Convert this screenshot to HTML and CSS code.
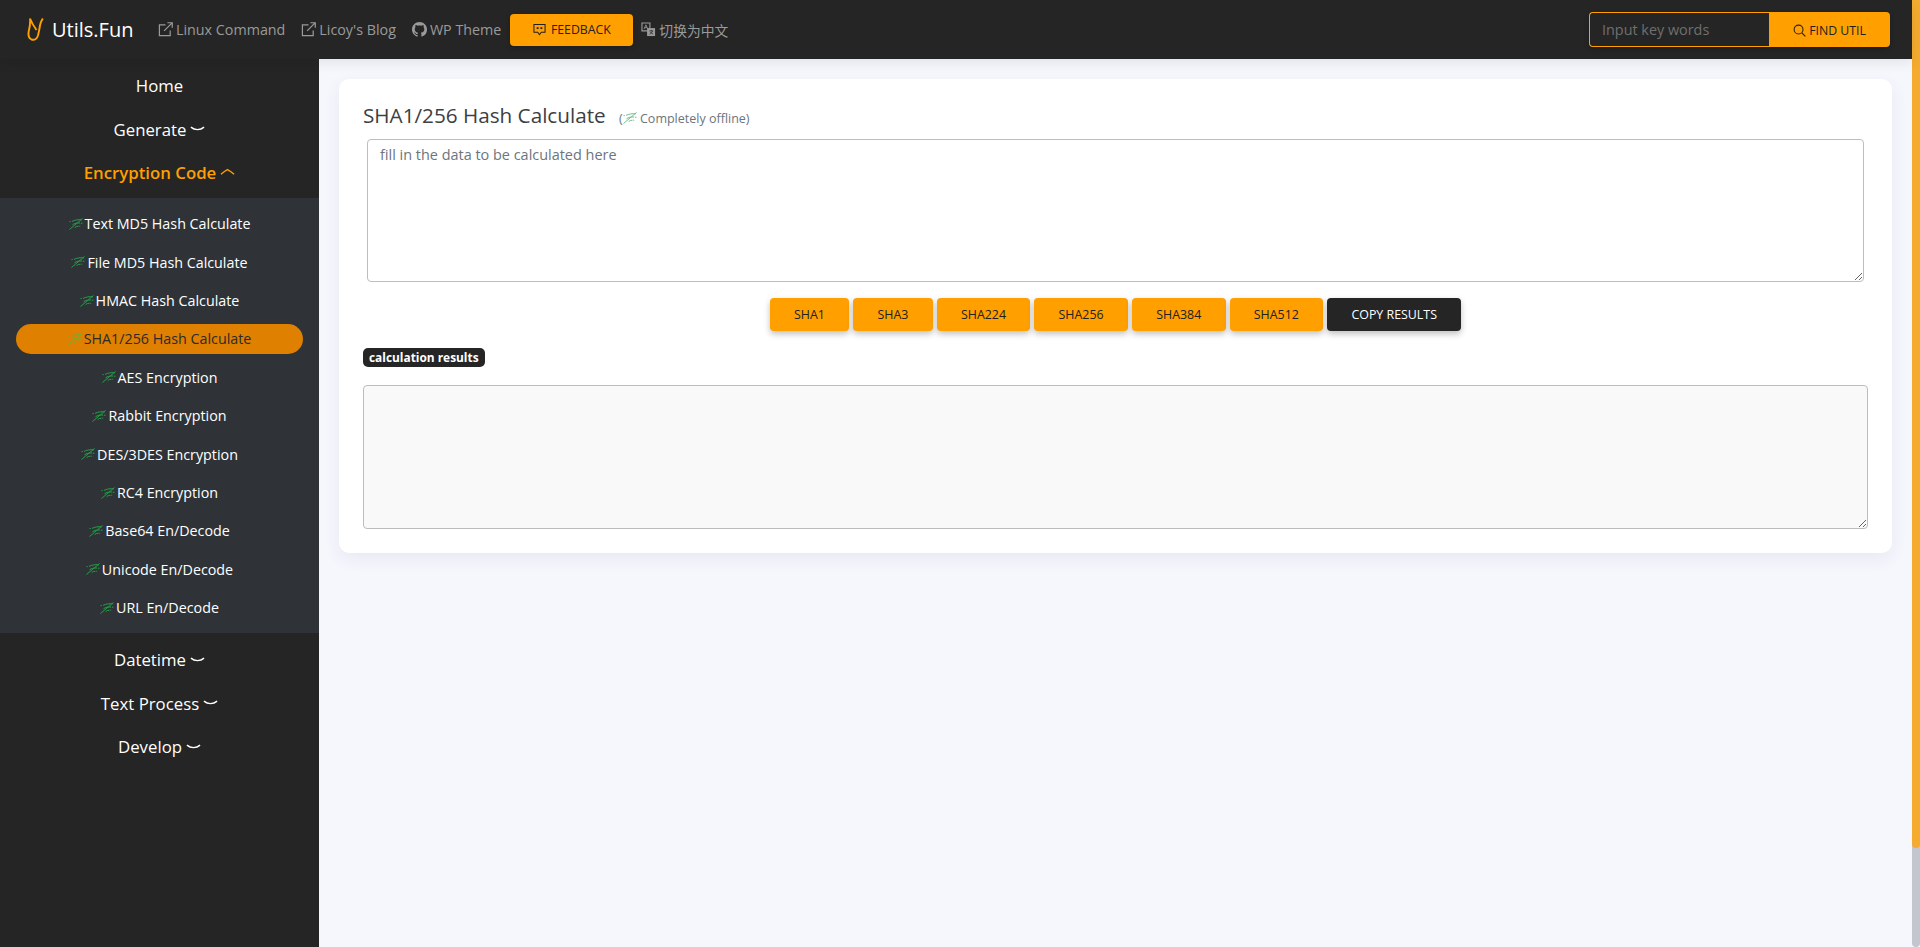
FILE: index.html
```html
<!DOCTYPE html>
<html lang="en">
<head>
    <meta charset="UTF-8">
    <meta name="viewport" content="width=device-width, initial-scale=1.0">
    <title>SHA1/256 Hash Calculate</title>
    <link rel="stylesheet" href="styles.css">
</head>
<body>
    <svg class="icon-defs" width="0" height="0">
        <symbol id="offline" viewBox="0 0 14 12">
            <path d="M.5 11.500 13.500.5M3 3.400C6 1.900 9 1.500 13 1.800M.5 3.600h1.300M3.500 6.800C5.500 5.300 8 4.800 11 5M11.800 5.200h1.700M5.700 9.500c1-.8 2.200-1.300 3.800-1.300M10.200 8.200h1" fill="none" stroke="currentColor" stroke-width="1"/>
        </symbol>
        <symbol id="external" viewBox="0 0 16 16">
            <path d="M13 9v5.500H1.500V3H8" fill="none" stroke="currentColor" stroke-width="1.300"/>
            <path d="M6.500 9.500 15 1M10 .8h5.200V6" fill="none" stroke="currentColor" stroke-width="1.300"/>
        </symbol>
        <symbol id="chevron-down" viewBox="0 0 16 8">
            <path d="M1 2c4 3.500 10 3.500 14 0" fill="none" stroke="currentColor" stroke-width="1.500"/>
        </symbol>
        <symbol id="chevron-up" viewBox="0 0 16 8">
            <path d="M1 6.500C5 3 7 2 8 1.500c1 .5 3 1.500 7 5" fill="none" stroke="currentColor" stroke-width="1.500"/>
        </symbol>
    </svg>

    <div class="page">
        <header class="topbar">
            <a class="brand">
                <svg class="brand-icon" viewBox="0 0 17 23">
                    <path d="M3 .5C3.500 5 3 8 2 12c-1 4-1 8 2.500 9.500 3 1 5.500-.5 6.500-4 1-4 1.500-7 2-10 .3-2.500 1.500-5 2.800-7M3 .5c1.500 4 4 8 6.500 11.500" fill="none" stroke="#ff9f00" stroke-width="1.900"/>
                </svg>
                <span>Utils.Fun</span>
            </a>
            <nav class="topnav">
                <a class="topnav-link"><svg class="topnav-icon"><use href="#external"/></svg>Linux Command</a>
                <a class="topnav-link"><svg class="topnav-icon"><use href="#external"/></svg>Licoy's Blog</a>
                <a class="topnav-link">
                    <svg class="topnav-icon" viewBox="0 0 16 16"><path fill="currentColor" d="M8 0C3.580 0 0 3.580 0 8c0 3.540 2.290 6.530 5.470 7.590.4.070.55-.17.55-.38 0-.19-.01-.82-.01-1.490-2.010.37-2.530-.49-2.690-.94-.09-.23-.48-.94-.82-1.130-.28-.15-.68-.52-.01-.53.63-.01 1.080.58 1.230.82.720 1.210 1.870.870 2.330.660.070-.520.280-.870.510-1.070-1.780-.2-3.640-.890-3.640-3.950 0-.870.310-1.590.820-2.150-.08-.2-.36-1.020.08-2.120 0 0 .67-.21 2.200.820.640-.18 1.320-.27 2-.27s1.360.09 2 .27c1.530-1.040 2.200-.82 2.200-.82.440 1.100.160 1.920.08 2.120.51.560.82 1.270.82 2.150 0 3.070-1.870 3.750-3.650 3.950.29.250.54.730.54 1.480 0 1.070-.01 1.930-.01 2.200 0 .21.150.46.55.38A8.010 8.010 0 0 0 16 8c0-4.420-3.580-8-8-8z"/></svg>
                    WP Theme
                </a>
                <a class="feedback-btn">
                    <svg class="feedback-icon" viewBox="0 0 14 14"><path d="M1 1.500h12v8.500H9l-2 2.500L5 10H1z" fill="none" stroke="currentColor" stroke-width="1.100"/><path d="M4 4.500h2v2H4zM8 4.500h2v2H8z" fill="currentColor"/></svg>
                    Feedback
                </a>
                <a class="topnav-link">
                    <svg class="topnav-icon" viewBox="0 0 16 16"><path d="M1 1h8.500v8.500H1z" fill="none" stroke="currentColor" stroke-width="1.200"/><path d="M6.500 6.500H15V15H6.500z" fill="currentColor"/><path d="M3.300 7.500 5.200 3l2 4.500M4 6h2.400" fill="none" stroke="currentColor" stroke-width=".9"/><path d="M9 9.500h4M11 8.500v1M12.300 9.500c-.5 1.800-1.800 3-3.300 3.500M9.800 10.500c.7 1.200 1.800 2 3.200 2.400" fill="none" stroke="#252525" stroke-width=".8"/></svg>
                    <span class="lang-text">切换为中文</span>
                </a>
            </nav>
            <form class="search">
                <input class="search-input" type="text" placeholder="Input key words">
                <button class="search-btn" type="button">
                    <svg class="search-icon" viewBox="0 0 14 14"><circle cx="6" cy="6" r="4.800" fill="none" stroke="currentColor" stroke-width="1.100"/><path d="m9.500 9.500 3.800 3.800" stroke="currentColor" stroke-width="1.200"/></svg>
                    Find Util
                </button>
            </form>
        </header>

        <div class="layout">
            <aside class="sidebar">
                <a class="menu-item">Home</a>
                <a class="menu-item">Generate <svg class="chevron"><use href="#chevron-down"/></svg></a>
                <a class="menu-item menu-item-open">Encryption Code <svg class="chevron"><use href="#chevron-up"/></svg></a>
                <div class="submenu">
                    <a class="submenu-item"><svg class="offline-icon"><use href="#offline"/></svg>Text MD5 Hash Calculate</a>
                    <a class="submenu-item"><svg class="offline-icon"><use href="#offline"/></svg>File MD5 Hash Calculate</a>
                    <a class="submenu-item"><svg class="offline-icon"><use href="#offline"/></svg>HMAC Hash Calculate</a>
                    <a class="submenu-item submenu-item-active"><svg class="offline-icon"><use href="#offline"/></svg>SHA1/256 Hash Calculate</a>
                    <a class="submenu-item"><svg class="offline-icon"><use href="#offline"/></svg>AES Encryption</a>
                    <a class="submenu-item"><svg class="offline-icon"><use href="#offline"/></svg>Rabbit Encryption</a>
                    <a class="submenu-item"><svg class="offline-icon"><use href="#offline"/></svg>DES/3DES Encryption</a>
                    <a class="submenu-item"><svg class="offline-icon"><use href="#offline"/></svg>RC4 Encryption</a>
                    <a class="submenu-item"><svg class="offline-icon"><use href="#offline"/></svg>Base64 En/Decode</a>
                    <a class="submenu-item"><svg class="offline-icon"><use href="#offline"/></svg>Unicode En/Decode</a>
                    <a class="submenu-item"><svg class="offline-icon"><use href="#offline"/></svg>URL En/Decode</a>
                </div>
                <a class="menu-item">Datetime <svg class="chevron"><use href="#chevron-down"/></svg></a>
                <a class="menu-item">Text Process <svg class="chevron"><use href="#chevron-down"/></svg></a>
                <a class="menu-item">Develop <svg class="chevron"><use href="#chevron-down"/></svg></a>
            </aside>

            <main class="content">
                <section class="card">
                    <h1 class="card-title">SHA1/256 Hash Calculate
                        <small class="card-note">(<svg class="note-icon"><use href="#offline"/></svg> Completely offline)</small>
                    </h1>
                    <div class="input-wrap">
                        <textarea class="data-input" placeholder="fill in the data to be calculated here"></textarea>
                    </div>
                    <div class="actions">
                        <button class="btn">SHA1</button>
                        <button class="btn">SHA3</button>
                        <button class="btn">SHA224</button>
                        <button class="btn">SHA256</button>
                        <button class="btn">SHA384</button>
                        <button class="btn">SHA512</button>
                        <button class="btn btn-dark">Copy Results</button>
                    </div>
                    <span class="badge">calculation results</span>
                    <textarea class="result" readonly></textarea>
                </section>
            </main>
        </div>
    </div>

    <div class="scrollbar"><div class="scrollbar-thumb"></div></div>
</body>
</html>
```

FILE: styles.css
```css
* {
    box-sizing: border-box;
}

body {
    margin: 0;
    height: 100vh;
    display: flex;
    overflow: hidden;
    font-family: "Open Sans", "Noto Sans CJK SC", sans-serif;
    background-color: #f6f7fd;
    color: #212529;
}

.icon-defs {
    position: absolute;
}

.page {
    flex: 1;
    min-width: 0;
    display: flex;
    flex-direction: column;
}

.scrollbar {
    width: 8px;
    background-color: #c3c6ce;
    border-radius: 0 0 4px 4px;
}

.scrollbar-thumb {
    height: 848px;
    background-color: #f4ab2e;
    border-radius: 0 0 4px 4px;
}

/* top bar */
.topbar {
    position: relative;
    z-index: 2;
    height: 59px;
    flex-shrink: 0;
    display: flex;
    align-items: center;
    padding: 0 22px 0 27px;
    background-color: #252525;
    box-shadow: 0 4px 12px rgba(0, 0, 0, 0.08);
}

.brand {
    display: flex;
    align-items: center;
    gap: 8px;
    width: 131px;
    color: #fff;
    font-size: 20px;
}

.brand-icon {
    width: 17px;
    height: 23px;
}

.topnav {
    display: flex;
    align-items: center;
    font-size: 14.300px;
}

.topnav-link {
    display: flex;
    align-items: center;
    gap: 3px;
    margin-right: 16px;
    color: #9a9a9a;
}

.topnav-link:nth-child(3) {
    margin-right: 9px;
}

.topnav-icon {
    width: 15px;
    height: 15px;
    flex-shrink: 0;
}

.lang-text {
    font-size: 13.800px;
}

.feedback-btn {
    display: flex;
    align-items: center;
    justify-content: center;
    gap: 5px;
    width: 123px;
    height: 32px;
    margin-right: 8px;
    background-color: #ff9f00;
    color: #212121;
    font-size: 12.300px;
    text-transform: uppercase;
    border-radius: 4px;
    box-shadow: 0 2px 5px rgba(0, 0, 0, 0.2);
}

.feedback-icon {
    width: 13px;
    height: 13px;
}

.search {
    display: flex;
    width: 301px;
    height: 35px;
    margin-left: auto;
    border-radius: 4px;
    box-shadow: 0 2px 5px rgba(0, 0, 0, 0.2);
}

.search-input {
    flex: 1;
    min-width: 0;
    padding: 0 12px;
    background-color: #252525;
    border: 1px solid #ff9f00;
    border-right: none;
    border-radius: 4px 0 0 4px;
    color: #fff;
    font-family: inherit;
    font-size: 14.400px;
    outline: none;
}

.search-input::placeholder {
    color: #6f6f6f;
}

.search-btn {
    width: 121px;
    display: flex;
    align-items: center;
    justify-content: center;
    gap: 3px;
    padding-top: 2px;
    background-color: #ff9f00;
    color: #212121;
    border: none;
    border-radius: 0 4px 4px 0;
    font-family: inherit;
    font-size: 12.300px;
    text-transform: uppercase;
    cursor: pointer;
}

.search-icon {
    width: 13px;
    height: 13px;
}

/* layout */
.layout {
    flex: 1;
    min-height: 0;
    display: flex;
}

.sidebar {
    width: 319px;
    flex-shrink: 0;
    padding-top: 5px;
    background-color: #252525;
}

.menu-item {
    display: flex;
    align-items: center;
    justify-content: center;
    gap: 4px;
    height: 43.400px;
    color: #fff;
    font-size: 16.800px;
}

.menu-item-open {
    color: #ff9f00;
    font-weight: 600;
}

.chevron {
    width: 15px;
    height: 8px;
}

.submenu {
    height: 435px;
    margin-top: 4px;
    margin-bottom: 5px;
    padding: 6.600px 16px 0;
    background-color: #2f3337;
}

.submenu-item {
    display: flex;
    align-items: center;
    justify-content: center;
    gap: 2px;
    height: 30px;
    margin: 4px 0 8.400px;
    color: #fff;
    font-size: 14.300px;
    border-radius: 15px;
}

.submenu-item-active {
    background-color: #e08000;
    color: #2b2b2b;
}

.offline-icon {
    width: 14px;
    height: 12px;
    color: #22a045;
}

.submenu-item-active .offline-icon {
    color: #6bb03a;
}

/* main card */
.content {
    flex: 1;
    min-width: 0;
    padding: 20px 20px 0;
}

.card {
    display: flex;
    flex-direction: column;
    align-items: flex-start;
    height: 474px;
    padding: 24px 24px 0;
    background-color: #fff;
    border-radius: 10px;
    box-shadow: 0 6px 16px rgba(60, 70, 110, 0.08);
}

.card-title {
    margin: 0;
    height: 36px;
    font-size: 20.700px;
    font-weight: 400;
    line-height: 25px;
    color: #3c4043;
}

.card-note {
    margin-left: 8px;
    font-size: 12.500px;
    color: #6c757d;
}

.note-icon {
    width: 14px;
    height: 12px;
    color: #6cc28d;
    vertical-align: -1px;
}

.input-wrap {
    width: 100%;
    padding: 0 4px;
}

.data-input,
.result {
    display: block;
    width: 100%;
    border: 1px solid #bdbdbd;
    border-radius: 4px;
    font-family: inherit;
    outline: none;
}

.data-input {
    height: 143px;
    padding: 5px 12px;
    font-size: 14.450px;
    color: #495057;
}

.data-input::placeholder {
    color: #6c757d;
}

.actions {
    align-self: stretch;
    display: flex;
    justify-content: center;
    gap: 4px;
    margin: 16px 0 17px;
}

.btn {
    height: 33px;
    padding: 0 24.300px;
    background-color: #ff9f00;
    color: #212121;
    border: none;
    border-radius: 4px;
    font-family: inherit;
    font-size: 12.400px;
    text-transform: uppercase;
    box-shadow: 0 3px 6px rgba(0, 0, 0, 0.25);
    cursor: pointer;
}

.btn-dark {
    background-color: #252525;
    color: #fff;
}

.badge {
    height: 19px;
    padding: 0 6px;
    margin-bottom: 18px;
    background-color: #252525;
    color: #fff;
    font-size: 11.900px;
    font-weight: 700;
    line-height: 19px;
    border-radius: 5px;
}

.result {
    height: 144px;
    background-color: #f9f9f9;
}
```
